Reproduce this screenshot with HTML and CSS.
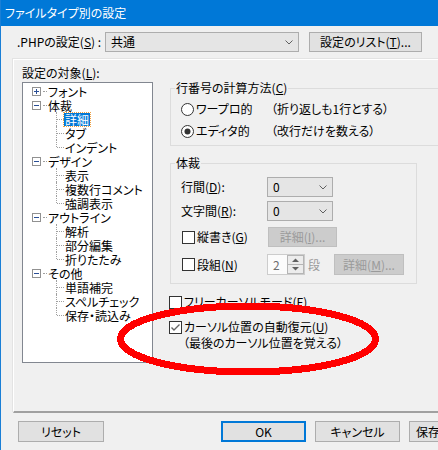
FILE: index.html
```html
<!DOCTYPE html>
<html lang="ja">
<head>
<meta charset="utf-8">
<title>ファイルタイプ別の設定</title>
<link rel="stylesheet" href="styles.css">
</head>
<body>
<div class="window">
  <div class="titlebar">ファイルタイプ別の設定</div>

  <div class="toprow">
    <span class="toplabel">.PHPの設定(<u>S</u>) :</span>
    <div class="combo combo-wide"><span>共通</span><svg class="chev" width="8" height="5" viewBox="0 0 8 5"><path d="M0.5 0.5L4 4L7.5 0.5" fill="none" stroke="#606060"/></svg></div>
    <button class="btn btn-list">設定のリスト(<u>T</u>)...</button>
  </div>

  <div class="panel">
    <div class="leftcol">
      <div class="treelabel">設定の対象(<u>L</u>):</div>
      <div class="tree">
        <div class="row lvl0"><svg class="exp" width="9" height="9" viewBox="0 0 9 9" shape-rendering="crispEdges"><rect x="0.5" y="0.5" width="8" height="8" fill="#fff" stroke="#919191"/><path d="M2 4.5h5M4.5 2v5" stroke="#2a4f96"/></svg><span class="hdots"></span><span class="txt">フォント</span></div>
        <div class="row lvl0"><svg class="exp" width="9" height="9" viewBox="0 0 9 9" shape-rendering="crispEdges"><rect x="0.5" y="0.5" width="8" height="8" fill="#fff" stroke="#919191"/><path d="M2 4.5h5" stroke="#2a4f96"/></svg><span class="hdots"></span><span class="txt">体裁</span></div>
        <div class="row lvl1"><span class="vline"></span><span class="hline"></span><span class="txt sel">詳細</span></div>
        <div class="row lvl1"><span class="vline"></span><span class="hline"></span><span class="txt">タブ</span></div>
        <div class="row lvl1"><span class="vline last"></span><span class="hline"></span><span class="txt">インデント</span></div>
        <div class="row lvl0"><svg class="exp" width="9" height="9" viewBox="0 0 9 9" shape-rendering="crispEdges"><rect x="0.5" y="0.5" width="8" height="8" fill="#fff" stroke="#919191"/><path d="M2 4.5h5" stroke="#2a4f96"/></svg><span class="hdots"></span><span class="txt">デザイン</span></div>
        <div class="row lvl1"><span class="vline"></span><span class="hline"></span><span class="txt">表示</span></div>
        <div class="row lvl1"><span class="vline"></span><span class="hline"></span><span class="txt">複数行コメント</span></div>
        <div class="row lvl1"><span class="vline last"></span><span class="hline"></span><span class="txt">強調表示</span></div>
        <div class="row lvl0"><svg class="exp" width="9" height="9" viewBox="0 0 9 9" shape-rendering="crispEdges"><rect x="0.5" y="0.5" width="8" height="8" fill="#fff" stroke="#919191"/><path d="M2 4.5h5" stroke="#2a4f96"/></svg><span class="hdots"></span><span class="txt">アウトライン</span></div>
        <div class="row lvl1"><span class="vline"></span><span class="hline"></span><span class="txt">解析</span></div>
        <div class="row lvl1"><span class="vline"></span><span class="hline"></span><span class="txt">部分編集</span></div>
        <div class="row lvl1"><span class="vline last"></span><span class="hline"></span><span class="txt">折りたたみ</span></div>
        <div class="row lvl0"><svg class="exp" width="9" height="9" viewBox="0 0 9 9" shape-rendering="crispEdges"><rect x="0.5" y="0.5" width="8" height="8" fill="#fff" stroke="#919191"/><path d="M2 4.5h5" stroke="#2a4f96"/></svg><span class="hdots"></span><span class="txt">その他</span></div>
        <div class="row lvl1"><span class="vline"></span><span class="hline"></span><span class="txt">単語補完</span></div>
        <div class="row lvl1"><span class="vline"></span><span class="hline"></span><span class="txt">スペルチェック</span></div>
        <div class="row lvl1"><span class="vline last"></span><span class="hline"></span><span class="txt">保存・読込み</span></div>
      </div>
    </div>

    <div class="rightcol">
      <fieldset class="group group1">
        <legend>行番号の計算方法(<u>C</u>)</legend>
        <div class="gbody g1body">
          <div class="radiorow">
            <svg class="radio" width="13" height="13" viewBox="0 0 13 13"><circle cx="6.5" cy="6.5" r="6" fill="#fff" stroke="#333"/></svg>
            <span class="rlabel">ワープロ的</span>
            <span class="rdesc">（折り返しも1行とする）</span>
          </div>
          <div class="radiorow">
            <svg class="radio" width="13" height="13" viewBox="0 0 13 13"><circle cx="6.5" cy="6.5" r="6" fill="#fff" stroke="#333"/><circle cx="6.5" cy="6.5" r="3" fill="#333"/></svg>
            <span class="rlabel">エディタ的</span>
            <span class="rdesc">（改行だけを数える）</span>
          </div>
        </div>
      </fieldset>

      <fieldset class="group group2">
        <legend>体裁</legend>
        <div class="gbody g2body">
          <div class="frow r1">
            <span class="flabel">行間(<u>D</u>):</span>
            <div class="combo combo-small"><span>0</span><svg class="chev" width="8" height="5" viewBox="0 0 8 5"><path d="M0.5 0.5L4 4L7.5 0.5" fill="none" stroke="#606060"/></svg></div>
          </div>
          <div class="frow r2">
            <span class="flabel">文字間(<u>R</u>):</span>
            <div class="combo combo-small"><span>0</span><svg class="chev" width="8" height="5" viewBox="0 0 8 5"><path d="M0.5 0.5L4 4L7.5 0.5" fill="none" stroke="#606060"/></svg></div>
          </div>
          <div class="frow r3">
            <span class="flabel checklabel"><svg class="check" width="13" height="13" viewBox="0 0 13 13" shape-rendering="crispEdges"><rect x="0.5" y="0.5" width="12" height="12" fill="#fff" stroke="#333"/></svg><span class="ctext">縦書き(<u>G</u>)</span></span>
            <button class="btn btn-dis btn-i" disabled>詳細(<u>I</u>)...</button>
          </div>
          <div class="frow r4">
            <span class="flabel checklabel"><svg class="check" width="13" height="13" viewBox="0 0 13 13" shape-rendering="crispEdges"><rect x="0.5" y="0.5" width="12" height="12" fill="#fff" stroke="#333"/></svg><span class="ctext">段組(<u>N</u>)</span></span>
            <div class="spin">
              <span class="spinval">2</span>
              <svg class="spinbtns" width="17" height="19" viewBox="0 0 17 19" shape-rendering="crispEdges"><rect x="0.5" y="0.5" width="16" height="9" fill="#ececec" stroke="#b5b5b5"/><rect x="0.5" y="9.5" width="16" height="9" fill="#ececec" stroke="#b5b5b5"/><path d="M5 7h7L8.5 3.5z" fill="#606060" shape-rendering="auto"/><path d="M5 12h7L8.5 15.5z" fill="#606060" shape-rendering="auto"/></svg>
            </div>
            <span class="dan">段</span>
            <button class="btn btn-dis btn-m" disabled>詳細(<u>M</u>)...</button>
          </div>
        </div>
      </fieldset>

      <div class="opt optA">
        <svg class="check" width="13" height="13" viewBox="0 0 13 13" shape-rendering="crispEdges"><rect x="0.5" y="0.5" width="12" height="12" fill="#fff" stroke="#333"/></svg>
        <span class="ctext">フリーカーソルモード(<u>F</u>)</span>
      </div>
      <div class="opt optB">
        <svg class="check" width="13" height="13" viewBox="0 0 13 13"><rect x="0.5" y="0.5" width="12" height="12" fill="#fff" stroke="#333" shape-rendering="crispEdges"/><path d="M2.5 6.5L5 9L10.5 3.5" fill="none" stroke="#666" stroke-width="1.4"/></svg>
        <span class="ctext">カーソル位置の自動復元(<u>U</u>)</span>
      </div>
      <div class="optnote">（最後のカーソル位置を覚える）</div>
    </div>
  </div>

  <div class="footer">
    <button class="btn btn-reset">リセット</button>
    <button class="btn btn-ok">OK</button>
    <button class="btn btn-cancel">キャンセル</button>
    <button class="btn btn-save">保存</button>
  </div>

  <svg class="mark" width="268" height="82" viewBox="0 0 268 82" shape-rendering="crispEdges"><ellipse cx="134" cy="40" rx="127.5" ry="33" fill="none" stroke="#ff0000" stroke-width="7"/></svg>
</div>
</body>
</html>
```

FILE: styles.css
```css
html, body {
  margin: 0;
  padding: 0;
}

body {
  width: 438px;
  height: 450px;
  overflow: hidden;
  background: #f0f0f0;
  font-family: "Noto Sans CJK JP", "Noto Sans", sans-serif;
  font-size: 12px;
  color: #000;
  font-feature-settings: "palt";
}

.window {
  position: relative;
  width: 438px;
  height: 450px;
  box-sizing: border-box;
  border-left: 1px solid #1a7fd6;
  overflow: hidden;
}

u {
  text-decoration: underline;
  text-underline-offset: 1px;
}

.titlebar {
  height: 26px;
  line-height: 26px;
  background: #0078d7;
  color: #fff;
  padding-left: 4px;
  font-size: 12px;
}

.toprow {
  display: flex;
  align-items: center;
  height: 20px;
  margin-top: 6px;
  padding-left: 16px;
}

.toplabel {
  width: 88px;
  line-height: 14px;
}

.combo {
  box-sizing: border-box;
  height: 20px;
  border: 1px solid #adadad;
  background: #e5e5e5;
  display: flex;
  align-items: center;
  justify-content: space-between;
  padding: 0 5px 0 5px;
  line-height: 14px;
}

.combo-wide {
  width: 194px;
}

.combo-small {
  width: 66px;
}

.chev {
  display: block;
}

.btn {
  box-sizing: border-box;
  border: 1px solid #adadad;
  background: #e1e1e1;
  font: inherit;
  color: #000;
  padding: 0;
  margin: 0;
  line-height: 14px;
  font-feature-settings: "palt";
}

.btn-list {
  margin-left: 10px;
  width: 113px;
  height: 20px;
}

.panel {
  display: flex;
  margin-top: 7px;
  margin-left: 12px;
  width: 470px;
  height: 351px;
  border-top: 1px solid #fff;
  border-left: 1px solid #fff;
  border-bottom: 2px solid #a0a0a0;
  box-shadow: -1px -1px 0 #e3e3e3;
}

.leftcol {
  padding-left: 8px;
}

.treelabel {
  padding-top: 6px;
  height: 14px;
  line-height: 14px;
  margin-bottom: 2px;
}

.tree {
  box-sizing: border-box;
  width: 131px;
  height: 281px;
  border: 1px solid #828790;
  background: #fff;
  padding-top: 1px;
}

.row {
  display: flex;
  align-items: center;
  height: 14px;
  line-height: 13px;
  white-space: nowrap;
}

.exp {
  display: block;
  margin-left: 9px;
  flex: none;
}

.hdots {
  width: 4px;
  margin-left: 2px;
  height: 0;
  border-top: 1px dotted #a0a0a0;
}

.lvl0 .txt {
  margin-left: 1px;
}

.vline {
  align-self: flex-start;
  margin-left: 33px;
  width: 0;
  height: 14px;
  border-left: 1px dotted #a0a0a0;
}

.vline.last {
  height: 7px;
}

.hline {
  width: 7px;
  height: 0;
  border-top: 1px dotted #a0a0a0;
}

.lvl1 .txt {
  margin-left: 0;
  padding: 0 1px;
}

.txt.sel {
  background: #0078d7;
  color: #fff;
  height: 13px;
  line-height: 13px;
  outline: 1px dotted #f0a040;
}

.rightcol {
  margin-left: 17px;
  width: 290px;
}

.group {
  margin: 0;
  padding: 0;
  border: 1px solid #dcdcdc;
  min-width: 0;
}

.group legend {
  margin-left: 4px;
  padding: 0 1px;
  line-height: 14px;
  height: 14px;
}

.group1 {
  margin-top: 21px;
  width: 290px;
  box-sizing: border-box;
}

.g1body {
  padding: 3px 0 3px 0;
}

.radiorow {
  display: flex;
  align-items: center;
  height: 22px;
  padding-left: 10px;
  line-height: 14px;
  white-space: nowrap;
}

.radio {
  display: block;
  flex: none;
}

.rlabel {
  margin-left: 2px;
  width: 75px;
}

.group2 {
  margin-top: 10px;
  width: 247px;
  box-sizing: border-box;
}

.g2body {
  padding: 0 0 8px 10px;
}

.frow {
  display: flex;
  align-items: center;
  height: 20px;
  line-height: 14px;
  white-space: nowrap;
}

.r1 { margin-top: 7px; }
.r2 { margin-top: 4px; }
.r3 { margin-top: 6px; }
.r4 { margin-top: 7px; height: 21px; }

.flabel {
  width: 86px;
  flex: none;
}

.checklabel {
  display: flex;
  align-items: center;
}

.check {
  display: block;
  flex: none;
}

.checklabel .check {
  margin-left: 1px;
}

.ctext {
  margin-left: 2px;
}

.r3 .checklabel {
  width: 87px;
}

.btn-dis {
  background: #cccccc;
  border-color: #bfbfbf;
  color: #9a9a9a;
}

.btn-i {
  width: 69px;
  height: 20px;
}

.spin {
  box-sizing: border-box;
  display: flex;
  align-items: center;
  justify-content: space-between;
  width: 38px;
  height: 21px;
  border: 1px solid #cccccc;
  background: #fbfbfb;
  padding-left: 5px;
}

.spinval {
  color: #6d6d6d;
}

.spinbtns {
  display: block;
}

.dan {
  margin-left: 3px;
  color: #9a9a9a;
}

.btn-m {
  margin-left: 14px;
  width: 70px;
  height: 21px;
}

.opt {
  display: flex;
  align-items: center;
  height: 16px;
  line-height: 14px;
  white-space: nowrap;
}

.opt .check {
  margin-left: -1px;
}

.opt .ctext {
  margin-left: 2px;
}

.optA { margin-top: 10px; }
.optB { margin-top: 9px; }

.optnote {
  height: 16px;
  line-height: 16px;
  padding-left: 13px;
  white-space: nowrap;
}

.footer {
  display: flex;
  margin-top: 8px;
  padding-left: 17px;
  white-space: nowrap;
}

.footer .btn {
  height: 21px;
  flex: none;
}

.btn-reset {
  width: 86px;
}

.btn-ok {
  width: 85px;
  margin-left: 117px;
  border: 2px solid #0078d7;
}

.btn-cancel {
  width: 85px;
  margin-left: 9px;
}

.btn-save {
  width: 85px;
  margin-left: 9px;
  text-align: left;
  padding-left: 6px;
}

.mark {
  position: absolute;
  left: 113px;
  top: 299px;
}
```
